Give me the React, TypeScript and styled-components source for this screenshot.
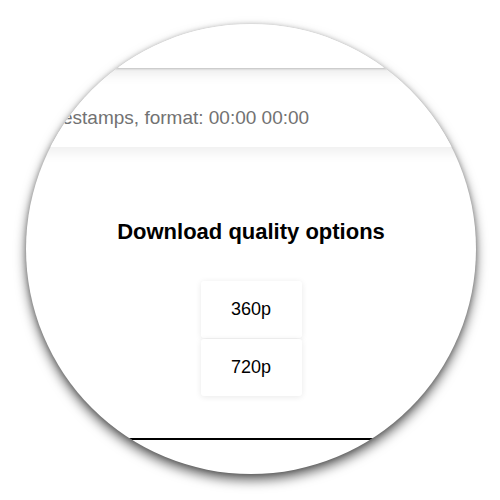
import React from "react";
import styled, { createGlobalStyle } from "styled-components";

const GlobalStyle = createGlobalStyle`
  html, body {
    margin: 0;
    padding: 0;
    background: #ffffff;
    font-family: "Liberation Sans", Arial, sans-serif;
  }
`;

const Stage = styled.div`
  width: 500px;
  height: 500px;
  padding: 24px 0 0 26px;
  box-sizing: border-box;
  background: #ffffff;
`;

const Lens = styled.div`
  width: 450px;
  height: 450px;
  border-radius: 50%;
  overflow: hidden;
  background: #ffffff;
  box-shadow: 0 6px 12px rgba(0, 0, 0, 0.6), 0 1px 5px rgba(0, 0, 0, 0.25);
  position: relative;
  isolation: isolate;
`;

const Page = styled.div`
  width: 600px;
  margin-left: -75px;
  display: flex;
  flex-direction: column;
`;

const Header = styled.div`
  height: 44px;
  background: #ffffff;
  position: relative;
  z-index: 2;
  box-shadow: 0 1px 2px rgba(0, 0, 0, 0.2), 0 4px 14px rgba(0, 0, 0, 0.1);
`;

const InputRow = styled.div`
  height: 79px;
  box-sizing: border-box;
  display: flex;
  align-items: center;
  padding: 20px 0 0 35px;
  background: #ffffff;
  position: relative;
  z-index: 1;
  box-shadow: 0 5px 12px rgba(0, 0, 0, 0.07);
  font-size: 19px;
  color: #727272;
`;

const Section = styled.div`
  display: flex;
  flex-direction: column;
  align-items: center;
  padding-top: 73px;
`;

const Heading = styled.h2`
  margin: 0;
  font-size: 22px;
  font-weight: bold;
  color: #000000;
  line-height: 24px;
`;

const Options = styled.div`
  display: flex;
  flex-direction: column;
  gap: 1px;
  margin-top: 37px;
`;

const Option = styled.button`
  width: 101px;
  height: 57px;
  border: none;
  border-radius: 3px;
  background: #ffffff;
  box-shadow: 0 1px 6px rgba(0, 0, 0, 0.09);
  font-family: "Liberation Sans", Arial, sans-serif;
  font-size: 18px;
  color: #000000;
  padding: 0;
`;

const Footer = styled.div`
  margin-top: 42px;
  width: 100%;
  border-top: 2px solid #000000;
  height: 60px;
`;

export default function App() {
  return (
    <>
      <GlobalStyle />
      <Stage>
        <Lens>
          <Page>
            <Header />
            <InputRow>Enter timestamps, format: 00:00 00:00</InputRow>
            <Section>
              <Heading>Download quality options</Heading>
              <Options>
                <Option>360p</Option>
                <Option>720p</Option>
              </Options>
              <Footer />
            </Section>
          </Page>
        </Lens>
      </Stage>
    </>
  );
}
